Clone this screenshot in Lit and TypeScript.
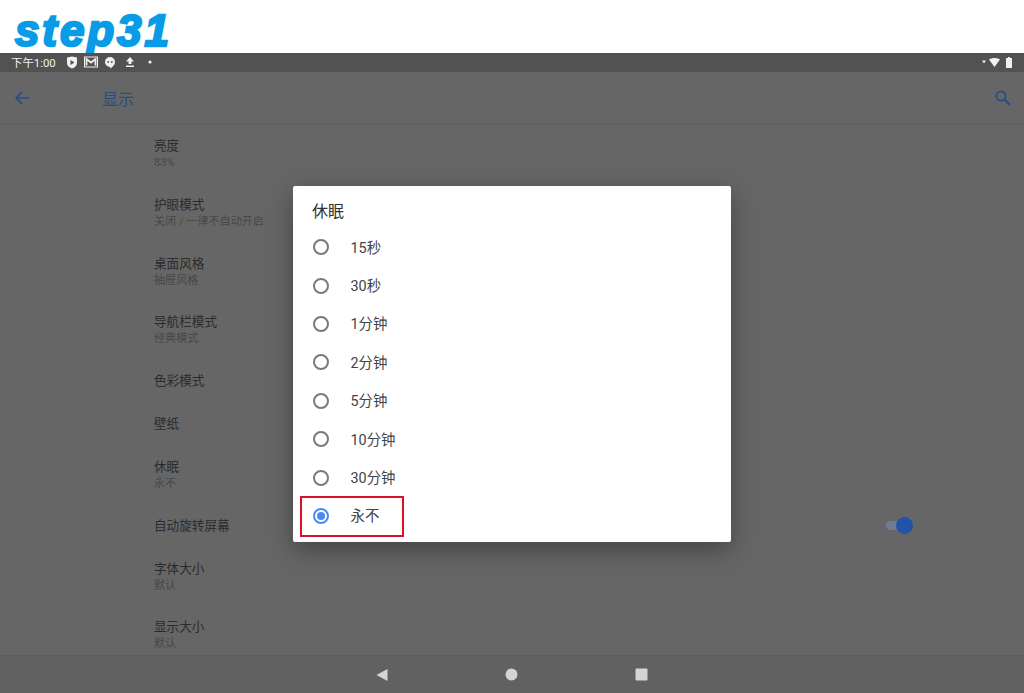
import { LitElement, html, css } from "lit";
import { customElement } from "lit/decorators.js";

const rows: { t: string; s?: string; toggle?: boolean }[] = [
  { t: "亮度", s: "83%" },
  { t: "护眼模式", s: "关闭 / 一律不自动开启" },
  { t: "桌面风格", s: "抽屉风格" },
  { t: "导航栏模式", s: "经典模式" },
  { t: "色彩模式" },
  { t: "壁纸" },
  { t: "休眠", s: "永不" },
  { t: "自动旋转屏幕", toggle: true },
  { t: "字体大小", s: "默认" },
  { t: "显示大小", s: "默认" },
];
const options = ["15秒", "30秒", "1分钟", "2分钟", "5分钟", "10分钟", "30分钟", "永不"];

@customElement("app-root")
export class AppRoot extends LitElement {
  static styles = css`
    :host {
      display: block;
      width: 1024px;
      height: 693px;
      overflow: hidden;
      background: #fff;
      font-family: Roboto, "Noto Sans CJK SC", sans-serif;
    }
    .brand {
      height: 53px;
      overflow: hidden;
      padding: 3px 0 0 15px;
      box-sizing: border-box;
    }
    .logo {
      display: block;
      font: italic 700 44px/56px "Liberation Sans", sans-serif;
      letter-spacing: 2.9px;
      color: #0a9be6;
      -webkit-text-stroke: 2.4px #0a9be6;
    }
    .device {
      position: relative;
      height: 640px;
      display: flex;
      flex-direction: column;
      background: #666;
      overflow: hidden;
    }
    .status {
      height: 19px;
      flex: none;
      background: #525252;
      display: flex;
      align-items: center;
      padding: 0 12px 1px 11px;
      box-sizing: border-box;
      color: #f0f0f0;
      font-size: 11.4px;
    }
    .time { width: 55px; }
    .notes { display: flex; align-items: center; gap: 6px; }
    .notes svg, .sys svg { display: block; }
    .sys { margin-left: auto; display: flex; align-items: center; gap: 3px; }
    .bar {
      height: 52px;
      flex: none;
      display: flex;
      align-items: center;
      box-sizing: border-box;
      padding: 0 11px 0 13px;
      border-bottom: 1px solid #5f5f5f;
      box-shadow: 0 1px 2px rgba(0, 0, 0, 0.06);
    }
    .bar h1 {
      margin: 0 0 0 69px;
      font-size: 16px;
      font-weight: 400;
      color: #2a4c80;
    }
    .bar .search { margin-left: auto; }
    .list { flex: 1; min-height: 0; overflow: hidden; padding-top: 1px; }
    .row {
      height: 43px;
      padding: 0 112px 0 154px;
      display: flex;
      align-items: center;
      justify-content: space-between;
      color: #2b2b2b;
      font-size: 12.6px;
    }
    .row.two { height: 58.7px; }
    .row.two > div:first-child { padding-bottom: 1px; }
    .row small {
      display: block;
      font-size: 11.1px;
      line-height: 14px;
      color: #484848;
      margin-top: 1px;
    }
    .row .ttl { display: block; line-height: 18px; }
    .toggle { position: relative; width: 26px; height: 9px; border-radius: 5px; background: #6f7c93; margin-top: -1px; }
    .thumb {
      position: absolute;
      right: -1px;
      top: -4px;
      width: 17px;
      height: 17px;
      border-radius: 50%;
      background: #2353a6;
    }
    .nav {
      height: 38px;
      flex: none;
      background: #616161;
      border-top: 1px solid #5c5c5c;
      box-sizing: border-box;
      display: flex;
      justify-content: center;
      align-items: center;
      gap: 117px;
      padding-right: 1px;
    }
    .dialog {
      position: absolute;
      left: 293px;
      top: 133px;
      width: 438px;
      height: 356px;
      box-sizing: border-box;
      background: #fff;
      border-radius: 2px;
      box-shadow: 0 8px 24px rgba(0, 0, 0, 0.35);
      color: #3c3c3c;
    }
    .dialog h2 {
      margin: 0;
      height: 42px;
      box-sizing: border-box;
      padding: 15px 0 0 19px;
      font-size: 16px;
      line-height: 22px;
      font-weight: 400;
      color: #333;
    }
    .opt {
      height: 38.4px;
      display: flex;
      align-items: center;
      padding-left: 20px;
      font-size: 14.4px;
      color: #444;
    }
    .opt .label { margin: -2px 0 0 -0.5px; }
    .radio {
      width: 16px;
      height: 16px;
      box-sizing: border-box;
      border: 2px solid #7a7a7a;
      border-radius: 50%;
      margin-right: 22px;
      display: flex;
      align-items: center;
      justify-content: center;
      flex: none;
    }
    .opt.on .radio { border-color: #4a8af4; }
    .opt.on .radio::after {
      content: "";
      width: 8px;
      height: 8px;
      border-radius: 50%;
      background: #4a8af4;
    }
    .mark {
      position: absolute;
      left: 7px;
      top: 310px;
      width: 104px;
      height: 41px;
      box-sizing: border-box;
      border: 2px solid #d8112b;
    }
  `;

  render() {
    return html`
      <div class="brand"><span class="logo">step31</span></div>
      <div class="device">
        <div class="status">
          <span class="time">下午1:00</span>
          <div class="notes">
            <svg width="12" height="13" viewBox="0 0 12 13"><path fill="#f0f0f0" d="M1 1.500 6 .5l5 1v5.500c0 2.800-2.400 4.700-5 5.600C3.400 11.700 1 9.800 1 7z"/><path fill="#525252" d="M4.500 4v5L8.500 6.500z"/></svg>
            <svg width="14" height="12" viewBox="0 0 14 12"><rect x=".5" y="1" width="13" height="10" fill="none" stroke="#f0f0f0"/><path fill="none" stroke="#f0f0f0" stroke-width="1.800" d="M2.500 9.500V3L7 6.500 11.500 3v6.500"/></svg>
            <svg width="12" height="13" viewBox="0 0 12 13"><path fill="#f0f0f0" d="M6 1a5 5 0 0 1 5 5c0 3-3 5.500-5 6.500V11a5 5 0 0 1 0-10z"/><circle cx="4.200" cy="6" r=".9" fill="#525252"/><circle cx="7.800" cy="6" r=".9" fill="#525252"/></svg>
            <svg width="12" height="12" viewBox="0 0 12 12" style="margin-left:2px"><path fill="#f0f0f0" d="M6 1 2 5.500h2.500V8h3V5.500H10zM2 9.500h8V11H2z"/></svg>
            <svg width="4" height="4" viewBox="0 0 4 4" style="margin-left:6px"><circle cx="2" cy="2" r="1.600" fill="#f0f0f0"/></svg>
          </div>
          <div class="sys">
            <svg width="4" height="4" viewBox="0 0 4 4"><path fill="#f0f0f0" d="M0 .5h4L2 3.500z"/></svg>
            <svg width="11" height="9" viewBox="0 0 11 9"><path fill="#f0f0f0" d="M0 1.500C3 -.5 8 -.5 11 1.500L5.500 9z"/></svg>
            <svg width="6" height="11" viewBox="0 0 6 11" style="margin-left:3px"><path fill="#f0f0f0" d="M2 0h2v1h2v10H0V1h2z"/></svg>
          </div>
        </div>
        <div class="bar">
          <svg width="20" height="20" viewBox="0 0 20 20"><path fill="none" stroke="#2a4c80" stroke-width="1.700" d="M16 10H3.500M9 4.200 3.200 10 9 15.800"/></svg>
          <h1>显示</h1>
          <svg class="search" width="20" height="20" viewBox="0 0 20 20"><circle cx="8" cy="8" r="4.700" fill="none" stroke="#2a4c80" stroke-width="1.800"/><path stroke="#2a4c80" stroke-width="2" d="m11.500 11.500 5.500 5.500"/></svg>
        </div>
        <div class="list">
          ${rows.map(
            (r) => html`
              <div class="row ${r.s ? "two" : ""}">
                <div>
                  <span class="ttl">${r.t}</span>
                  ${r.s ? html`<small>${r.s}</small>` : ""}
                </div>
                ${r.toggle ? html`<div class="toggle"><div class="thumb"></div></div>` : ""}
              </div>
            `
          )}
        </div>
        <div class="nav">
          <svg width="12" height="14" viewBox="0 0 12 14"><path fill="#d4d4d4" d="M11.500 1v12L.5 7z"/></svg>
          <svg width="13" height="13" viewBox="0 0 13 13"><circle cx="6.500" cy="6.500" r="6" fill="#d4d4d4"/></svg>
          <svg width="13" height="13" viewBox="0 0 13 13"><rect x=".5" y=".5" width="12" height="12" rx="1" fill="#d4d4d4"/></svg>
        </div>
        <div class="dialog">
          <h2>休眠</h2>
          ${options.map(
            (o, i) => html`
              <div class="opt ${i === options.length - 1 ? "on" : ""}">
                <span class="radio"></span><span class="label">${o}</span>
              </div>
            `
          )}
          <div class="mark"></div>
        </div>
      </div>
    `;
  }
}
